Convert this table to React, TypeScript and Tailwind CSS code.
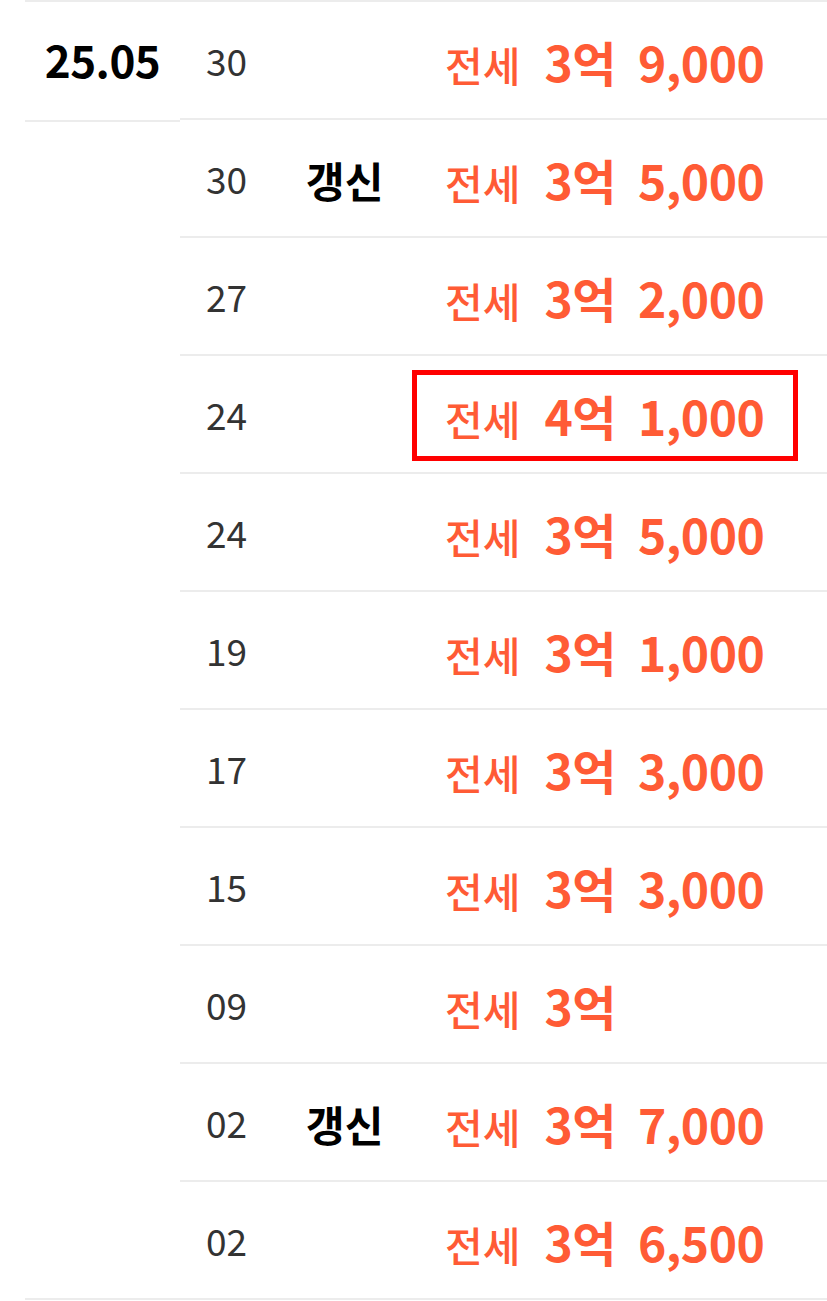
import React from 'react';

interface Deal {
  day: string;
  renewed?: boolean;
  eok: string;
  rest?: string;
  highlight?: boolean;
}

const deals: Deal[] = [
  { day: '30', eok: '3억', rest: '9,000' },
  { day: '30', renewed: true, eok: '3억', rest: '5,000' },
  { day: '27', eok: '3억', rest: '2,000' },
  { day: '24', eok: '4억', rest: '1,000', highlight: true },
  { day: '24', eok: '3억', rest: '5,000' },
  { day: '19', eok: '3억', rest: '1,000' },
  { day: '17', eok: '3억', rest: '3,000' },
  { day: '15', eok: '3억', rest: '3,000' },
  { day: '09', eok: '3억' },
  { day: '02', renewed: true, eok: '3억', rest: '7,000' },
  { day: '02', eok: '3억', rest: '6,500' },
];

const font = { fontFamily: '"Noto Sans CJK KR", "Noto Sans", sans-serif' };

const Price: React.FC<{ deal: Deal }> = ({ deal }) => (
  <div className="flex items-baseline text-[#ff5b35] whitespace-nowrap">
    <span className="text-[41px] font-medium mr-[24px]">전세</span>
    <span className="text-[48px] font-bold tracking-[-0.5px]">{deal.eok}</span>
    {deal.rest && (
      <span className="text-[48px] font-bold ml-[22px] tracking-[-0.5px]">{deal.rest}</span>
    )}
  </div>
);

const App: React.FC = () => {
  return (
    <div className="w-[827px] h-[1301px] bg-white overflow-hidden" style={font}>
      <div className="flex ml-[25px] border-t-2 border-[#ececec]">
        {/* month column */}
        <div className="w-[155px] flex flex-col">
          <div className="h-[120px] border-b-2 border-[#ececec] flex items-center justify-center">
            <span className="text-[44px] font-bold text-black tracking-[-0.5px] mt-[-4px]">25.05</span>
          </div>
          <div className="flex-1 border-b-2 border-[#ececec]" />
        </div>

        {/* deal rows */}
        <div className="flex-1">
          {deals.map((deal, i) => (
            <div key={i} className="h-[118px] border-b-2 border-[#ececec] flex items-center pt-[2px]">
              <span className="w-[100px] pl-[26px] text-[37px] text-[#333]">{deal.day}</span>
              <span className="w-[165px] pl-[26px] text-[42px] font-bold text-black">
                {deal.renewed ? '갱신' : ''}
              </span>
              {deal.highlight ? (
                <div className="ml-[-33px] border-[5px] border-[#ff0000] pl-[28px] pr-[29px] h-[91px] flex items-center">
                  <Price deal={deal} />
                </div>
              ) : (
                <Price deal={deal} />
              )}
            </div>
          ))}
        </div>
      </div>
    </div>
  );
};

export default App;
